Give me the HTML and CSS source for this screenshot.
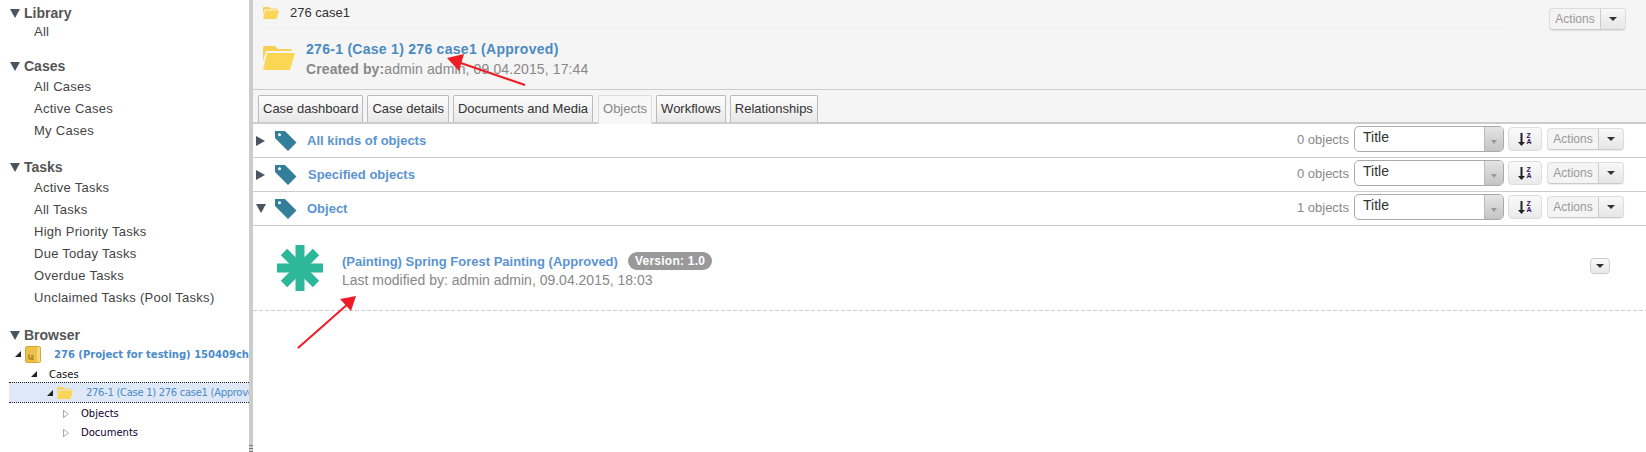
FILE: index.html
```html
<!DOCTYPE html>
<html lang="en">
<head>
  <meta charset="UTF-8">
  <title>Case objects</title>
  <link rel="stylesheet" href="styles.css">
</head>
<body>
  <svg class="defs" width="0" height="0">
    <symbol id="folder" viewBox="0 0 32 24">
      <path fill="#f7cf55" d="M0 22V1.5Q0 0 1.5 0H12L15 3H27Q29 3 29 5H3L0 15Z"/>
      <path fill="#fbd654" d="M4 7H32L27 24H0Z"/>
    </symbol>
    <symbol id="tag" viewBox="0 0 22 21">
      <path fill="#337f99" fill-rule="evenodd" d="M0 1H10L21.500 12.500L13 21L0 8ZM4.500 3.300a1.500 1.500 0 1 0 .01 0Z"/>
    </symbol>
    <symbol id="sort" viewBox="0 0 7 13">
      <path fill="#222" d="M2.500 0H4.500V9H7L3.500 13L0 9H2.500Z"/>
    </symbol>
  </svg>

  <!-- left navigation -->
  <aside class="sidebar">
    <section class="nav-group nav-group-first">
      <h3 class="nav-title"><span class="caret-down"></span>Library</h3>
      <a class="nav-item nav-item-tight">All</a>
    </section>
    <section class="nav-group">
      <h3 class="nav-title"><span class="caret-down"></span>Cases</h3>
      <a class="nav-item">All Cases</a>
      <a class="nav-item">Active Cases</a>
      <a class="nav-item">My Cases</a>
    </section>
    <section class="nav-group nav-group-tasks">
      <h3 class="nav-title"><span class="caret-down"></span>Tasks</h3>
      <a class="nav-item">Active Tasks</a>
      <a class="nav-item">All Tasks</a>
      <a class="nav-item">High Priority Tasks</a>
      <a class="nav-item">Due Today Tasks</a>
      <a class="nav-item">Overdue Tasks</a>
      <a class="nav-item">Unclaimed Tasks (Pool Tasks)</a>
    </section>
    <section class="nav-group">
      <h3 class="nav-title"><span class="caret-down"></span>Browser</h3>
      <div class="tree">
        <div class="tree-row tree-row-project">
          <span class="tree-open"></span>
          <svg class="book" width="16" height="17" viewBox="0 0 16 17">
            <rect x="0.500" y="0.500" width="15" height="16" rx="1.500" fill="#eec04a" stroke="#d9a935"/>
            <rect x="12" y="1" width="3" height="15" fill="#f6d77e"/>
            <path d="M4 8V13H9M6 10H9M6 12H8" fill="none" stroke="#8a6a1a"/>
          </svg>
          <span class="tree-project">276 (Project for testing) 150409ch</span>
        </div>
        <div class="tree-row tree-row-cases">
          <span class="tree-open"></span>
          <span class="tree-text">Cases</span>
        </div>
        <div class="tree-row tree-row-case">
          <span class="tree-open"></span>
          <svg class="tree-folder" width="16" height="12"><use href="#folder"/></svg>
          <span class="tree-case">276-1 (Case 1) 276 case1 (Approved)</span>
        </div>
        <div class="tree-row tree-row-leaf">
          <span class="tree-closed"></span>
          <span class="tree-text">Objects</span>
        </div>
        <div class="tree-row tree-row-leaf">
          <span class="tree-closed"></span>
          <span class="tree-text">Documents</span>
        </div>
      </div>
    </section>
  </aside>

  <div class="splitter"><span class="grip"></span></div>

  <main class="main">
    <div class="head">
      <div class="topbar">
        <div class="crumb">
          <svg class="crumb-folder" width="16" height="12"><use href="#folder"/></svg>
          <span>276 case1</span>
        </div>
        <div class="btn-group btn-group-top">
          <span class="btn-label">Actions</span><span class="btn-drop"><i class="arrow"></i></span>
        </div>
      </div>
      <div class="case-head">
        <svg class="case-folder" width="32" height="24"><use href="#folder"/></svg>
        <div>
          <a class="case-title">276-1 (Case 1) 276 case1 (Approved)</a>
          <p class="case-meta"><b>Created by:</b>admin admin, 09.04.2015, 17:44</p>
        </div>
      </div>
    </div>

    <nav class="tabs">
      <a class="tab">Case dashboard</a>
      <a class="tab">Case details</a>
      <a class="tab">Documents and Media</a>
      <a class="tab tab-active">Objects</a>
      <a class="tab">Workflows</a>
      <a class="tab">Relationships</a>
    </nav>

    <div class="row">
      <span class="caret-right"></span>
      <svg class="tag" width="22" height="21"><use href="#tag"/></svg>
      <a class="row-title">All kinds of objects</a>
      <span class="row-count">0 objects</span>
      <div class="select"><span class="select-text">Title</span><span class="select-arrow"></span></div>
      <div class="sort-btn"><svg width="7" height="13"><use href="#sort"/></svg><span class="sort-az">Z<br>A</span></div>
      <div class="btn-group"><span class="btn-label">Actions</span><span class="btn-drop"><i class="arrow"></i></span></div>
    </div>
    <div class="row">
      <span class="caret-right"></span>
      <svg class="tag" width="22" height="21"><use href="#tag"/></svg>
      <a class="row-title row-title-shift">Specified objects</a>
      <span class="row-count">0 objects</span>
      <div class="select"><span class="select-text">Title</span><span class="select-arrow"></span></div>
      <div class="sort-btn"><svg width="7" height="13"><use href="#sort"/></svg><span class="sort-az">Z<br>A</span></div>
      <div class="btn-group"><span class="btn-label">Actions</span><span class="btn-drop"><i class="arrow"></i></span></div>
    </div>
    <div class="row">
      <span class="caret-open"></span>
      <svg class="tag" width="22" height="21"><use href="#tag"/></svg>
      <a class="row-title">Object</a>
      <span class="row-count">1 objects</span>
      <div class="select"><span class="select-text">Title</span><span class="select-arrow"></span></div>
      <div class="sort-btn"><svg width="7" height="13"><use href="#sort"/></svg><span class="sort-az">Z<br>A</span></div>
      <div class="btn-group"><span class="btn-label">Actions</span><span class="btn-drop"><i class="arrow"></i></span></div>
    </div>

    <div class="entry">
      <svg class="entry-icon" width="46" height="46" viewBox="0 0 46 46">
        <g stroke="#2db899" stroke-width="9">
          <path d="M23 0V46M0 23H46M7 7L39 39M39 7L7 39"/>
        </g>
      </svg>
      <div class="entry-body">
        <div class="entry-line">
          <a class="entry-title">(Painting) Spring Forest Painting (Approved)</a>
          <span class="badge">Version: 1.0</span>
        </div>
        <p class="entry-meta">Last modified by: admin admin, 09.04.2015, 18:03</p>
      </div>
      <span class="entry-drop"><i class="arrow"></i></span>
    </div>
  </main>

  <!-- red arrows drawn over the screenshot -->
  <svg class="arrow-layer" width="1646" height="452">
    <g fill="#ee1c25" stroke="#ee1c25">
      <path d="M525 85L455 61" stroke-width="2" fill="none"/>
      <path d="M447 58L464 54L459 71Z" stroke="none"/>
      <path d="M298 348L349 303" stroke-width="2" fill="none"/>
      <path d="M356 296L351 311L340 299Z" stroke="none"/>
    </g>
  </svg>
</body>
</html>
```

FILE: styles.css
```css
html, body {
  height: 100%;
}
body {
  margin: 0;
  display: flex;
  height: 452px;
  overflow: hidden;
  font-family: "Liberation Sans", Arial, sans-serif;
  font-size: 13px;
  color: #333;
  background: #fff;
}
p, h3 {
  margin: 0;
}
.defs {
  position: absolute;
}

/* sidebar */
.sidebar {
  width: 249px;
  flex: none;
  overflow: hidden;
  padding-top: 4px;
  box-sizing: border-box;
}
.nav-group {
  margin-bottom: 17px;
}
.nav-group-tasks {
  margin-bottom: 18px;
}
.nav-title {
  display: flex;
  align-items: center;
  height: 18px;
  padding-left: 10px;
  font-size: 14px;
  font-weight: bold;
  color: #555;
}
.caret-down {
  width: 0;
  height: 0;
  margin-right: 4px;
  border-left: 5px solid transparent;
  border-right: 5px solid transparent;
  border-top: 9px solid #4a5561;
}
.nav-item {
  display: block;
  height: 22px;
  line-height: 24px;
  padding-left: 34px;
  letter-spacing: 0.27px;
  color: #444;
}
.nav-item-tight {
  height: 18px;
  line-height: 20px;
}

/* tree */
.tree {
  margin-top: 0;
  font-family: "DejaVu Sans", sans-serif;
  font-size: 10px;
  color: #111;
}
.tree-row {
  display: flex;
  align-items: center;
  height: 20px;
  white-space: nowrap;
}
.tree-open {
  width: 0;
  height: 0;
  flex: none;
  border-left: 6px solid transparent;
  border-bottom: 6px solid #222;
}
.tree-closed {
  flex: none;
  box-sizing: border-box;
  width: 6px;
  height: 9px;
  margin-top: 3px;
  background: #aaa;
  clip-path: polygon(0 0, 100% 50%, 0 100%, 0 0, 1px 2px, 1px 7px, 5px 4.500px, 1px 2px);
}
.tree-row-project {
  padding-left: 15px;
}
.tree-row-project .book {
  margin-left: 4px;
  flex: none;
}
.tree-project {
  margin-left: 13px;
  color: #4a8bc9;
  font-weight: bold;
}
.tree-row-cases {
  padding-left: 31px;
}
.tree-row-cases .tree-text {
  margin-left: 12px;
}
.tree-row-case {
  margin-left: 9px;
  padding-left: 38px;
  background: #dfe8f6;
  border-top: 1px dotted #222;
  border-bottom: 1px dotted #222;
  height: 19px;
  margin-top: -2px;
}
.tree-folder {
  margin-left: 4px;
  flex: none;
}
.tree-case {
  margin-left: 13px;
  letter-spacing: -0.3px;
  color: #4a8bc9;
}
.tree-row-leaf {
  height: 19px;
  padding-left: 63px;
}
.tree-row-leaf .tree-text {
  margin-left: 12px;
  padding-top: 2px;
  color: #110033;
}

.splitter {
  width: 4px;
  flex: none;
  background: #ccc;
  display: flex;
  align-items: flex-end;
}
.grip {
  width: 4px;
  height: 7px;
  background: repeating-linear-gradient(#777 0 1px, #ccc 1px 3px);
}

/* main column */
.main {
  flex: 1;
  min-width: 0;
}
.head {
  height: 89px;
  background: #f5f5f5;
  border-bottom: 1px solid #ccc;
}
.topbar {
  display: flex;
  height: 29px;
  padding-left: 10px;
}
.crumb {
  display: flex;
  align-items: center;
  width: 1240px;
  height: 28px;
  padding-bottom: 2px;
  box-sizing: border-box;
  border-bottom: 1px solid #eee;
  color: #333;
}
.crumb-folder {
  margin-right: 11px;
}
.btn-group {
  display: flex;
  flex: none;
  width: 77px;
  height: 22px;
  box-sizing: border-box;
  border: 1px solid #ddd;
  border-bottom-color: #ccc;
  border-radius: 4px;
  box-shadow: 0 1px 1px rgba(0, 0, 0, 0.08);
  font-size: 12px;
  color: #999;
  background: #f4f4f4;
}
.btn-group-top {
  margin: 8px 0 0 46px;
}
.btn-label {
  width: 50px;
  line-height: 20px;
  text-align: center;
  border-right: 1px solid #ccc;
}
.btn-drop {
  flex: 1;
  display: flex;
  align-items: center;
  justify-content: center;
  background: linear-gradient(#f8f8f8, #e6e6e6);
  border-radius: 0 4px 4px 0;
}
.arrow {
  width: 0;
  height: 0;
  border-left: 4px solid transparent;
  border-right: 4px solid transparent;
  border-top: 4px solid #333;
}
.case-head {
  display: flex;
  padding: 10px 0 0 10px;
}
.case-folder {
  margin: 7px 11px 0 0;
}
.case-title {
  display: block;
  line-height: 20px;
  font-size: 14px;
  font-weight: bold;
  letter-spacing: 0.28px;
  color: #4a8bc2;
}
.case-meta {
  line-height: 20px;
  font-size: 14px;
  letter-spacing: 0.11px;
  color: #888;
}

/* tabs */
.tabs {
  display: flex;
  gap: 4px;
  height: 27px;
  padding: 5px 0 0 5px;
  background: #f5f5f5;
  border-bottom: 2px solid #ccc;
}
.tab {
  height: 27px;
  line-height: 26px;
  padding: 0 4px;
  box-sizing: border-box;
  border: 1px solid #bbb;
  border-bottom: none;
  border-radius: 2px 2px 0 0;
  background: linear-gradient(#fdfdfd, #e8e8e8);
  color: #333;
  white-space: nowrap;
}
.tab-active {
  height: 29px;
  margin-left: 1px;
  border-color: #ddd;
  background: #f7f7f7;
  color: #888;
}

/* object groups */
.row {
  display: flex;
  align-items: center;
  height: 33px;
  border-bottom: 1px solid #ccc;
}
.caret-right {
  width: 0;
  height: 0;
  margin-left: 3px;
  border-top: 5px solid transparent;
  border-bottom: 5px solid transparent;
  border-left: 9px solid #4a5561;
}
.caret-open {
  width: 0;
  height: 0;
  margin-left: 3px;
  margin-right: -1px;
  border-left: 5px solid transparent;
  border-right: 5px solid transparent;
  border-top: 9px solid #4a5561;
}
.tag {
  margin: 0 10px 0 10px;
  flex: none;
}
.row-title {
  flex: 1;
  font-weight: bold;
  color: #5b94d0;
}
.row-title-shift {
  padding-left: 1px;
}
.row-count {
  margin: 0 5px 3px 0;
  color: #888;
}
.select {
  display: flex;
  width: 150px;
  height: 26px;
  box-sizing: border-box;
  margin: 0 4px 3px 0;
  border: 1px solid #aaa;
  border-radius: 5px;
  overflow: hidden;
}
.select-text {
  flex: 1;
  padding-left: 8px;
  line-height: 21px;
  font-size: 14px;
}
.select-arrow {
  width: 18px;
  position: relative;
  background: linear-gradient(#e4e4e4, #c4c4c4);
  border-left: 1px solid #bbb;
}
.select-arrow::after {
  content: "";
  position: absolute;
  left: 6px;
  top: 13px;
  border-left: 3px solid transparent;
  border-right: 3px solid transparent;
  border-top: 4px solid #999;
}
.sort-btn {
  display: flex;
  align-items: center;
  justify-content: center;
  gap: 1px;
  width: 34px;
  height: 24px;
  box-sizing: border-box;
  margin: 0 5px 3px 0;
  border: 1px solid #ddd;
  border-radius: 4px;
  background: linear-gradient(#fafafa, #eaeaea);
}
.sort-az {
  font-size: 7px;
  line-height: 6px;
  font-weight: bold;
  color: #30105a;
}
.row .btn-group {
  margin: 0 22px 3px 0;
}

/* single object */
.entry {
  display: flex;
  height: 85px;
  padding: 19px 36px 0 24px;
  box-sizing: border-box;
  background: linear-gradient(to right, #ccc 4px, transparent 4px) left bottom / 6px 1px repeat-x;
}
.entry-icon {
  flex: none;
  margin-right: 19px;
}
.entry-body {
  flex: 1;
  padding-top: 7px;
}
.entry-line {
  display: flex;
  align-items: center;
  height: 18px;
}
.entry-title {
  font-weight: bold;
  color: #5b94d0;
  font-size: 13px;
}
.badge {
  margin-left: 10px;
  padding: 0 7px;
  line-height: 18px;
  border-radius: 9px;
  background: #999;
  color: #fff;
  font-size: 12px;
  font-weight: bold;
  letter-spacing: 0.25px;
}
.entry-meta {
  line-height: 21px;
  font-size: 14px;
  color: #888;
}
.entry-drop {
  display: flex;
  align-items: center;
  justify-content: center;
  width: 20px;
  height: 16px;
  margin-top: 13px;
  box-sizing: border-box;
  border: 1px solid #ccc;
  border-radius: 4px;
  background: linear-gradient(#fafafa, #e8e8e8);
}

.arrow-layer {
  position: absolute;
  left: 0;
  top: 0;
  pointer-events: none;
}
```
